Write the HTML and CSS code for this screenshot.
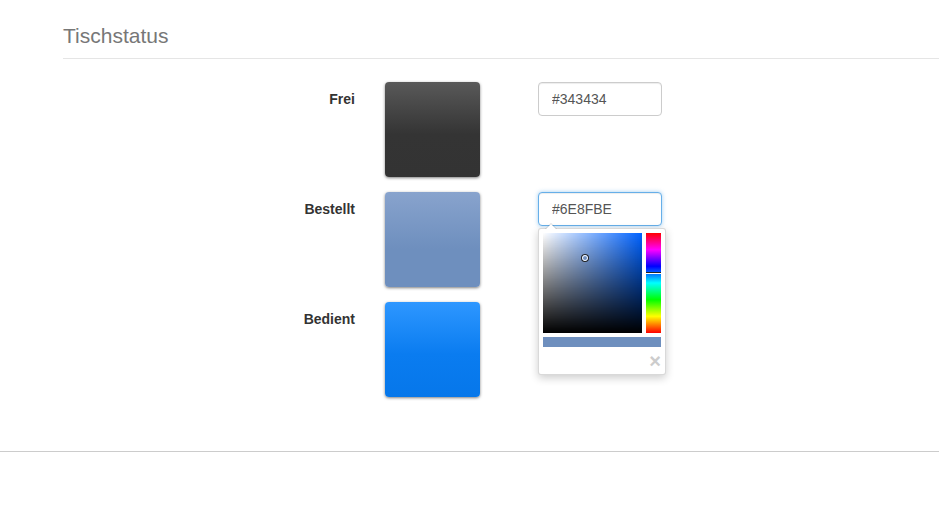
FILE: index.html
```html
<!DOCTYPE html>
<html>
<head>
    <title>Tischstatus</title>
    <link rel="stylesheet" href="styles.css">
</head>
<body>
    <div class="panel">
        <h2 class="panel-title">Tischstatus</h2>

        <div class="status-form">
            <div class="status-row">
                <label class="status-label" for="colFrei">Frei</label>
                <div class="swatch swatch-frei"></div>
                <div class="color-field">
                    <input type="text" id="colFrei" class="color-input" value="#343434">
                </div>
            </div>

            <div class="status-row">
                <label class="status-label" for="colBestellt">Bestellt</label>
                <div class="swatch swatch-bestellt"></div>
                <div class="color-field">
                    <input type="text" id="colBestellt" class="color-input focused" value="#6E8FBE">

                    <div class="picker">
                        <div class="picker-main">
                            <div class="sat-box">
                                <span class="sat-cursor"></span>
                            </div>
                            <div class="hue-bar">
                                <span class="hue-marker"></span>
                            </div>
                        </div>
                        <div class="picker-preview"></div>
                        <div class="picker-foot">
                            <span class="picker-close">&times;</span>
                        </div>
                    </div>
                </div>
            </div>

            <div class="status-row">
                <label class="status-label" for="colBedient">Bedient</label>
                <div class="swatch swatch-bedient"></div>
                <div class="color-field"></div>
            </div>
        </div>
    </div>
</body>
</html>
```

FILE: styles.css
```css
body {
    margin: 0;
    font-family: "Liberation Sans", Arial, sans-serif;
    font-size: 14px;
    color: #333;
    background: #fff;
}

.panel {
    border-bottom: 1px solid #cccccc;
    padding-bottom: 54px;
}

.panel-title {
    margin: 0 0 0 63px;
    padding: 24px 0 10px 0;
    font-size: 21px;
    font-weight: normal;
    line-height: 24px;
    color: #777;
    border-bottom: 1px solid #e5e5e5;
}

.status-form {
    padding-top: 23px;
    display: flex;
    flex-direction: column;
    gap: 15px;
}

.status-row {
    display: flex;
    align-items: flex-start;
}

.status-label {
    width: 355px;
    padding-top: 7px;
    line-height: 20px;
    text-align: right;
    font-weight: bold;
    color: #333;
}

.swatch {
    width: 95px;
    height: 95px;
    margin-left: 30px;
    border-radius: 4px;
    box-shadow: 0 1px 3px rgba(0, 0, 0, 0.5);
}

.swatch-frei {
    background: linear-gradient(#595959, #343434 55%, #333);
}

.swatch-bestellt {
    background: linear-gradient(#88a3cd, #6e8fbe 60%);
}

.swatch-bedient {
    background: linear-gradient(#2e97ff, #0a7cf0 55%, #0677ea);
}

.color-field {
    position: relative;
    margin-left: 58px;
    width: 124px;
}

.color-input {
    box-sizing: border-box;
    width: 124px;
    height: 34px;
    padding: 6px 13px;
    font-family: "Liberation Sans", Arial, sans-serif;
    font-size: 14px;
    color: #555;
    border: 1px solid #ccc;
    border-radius: 4px;
    background: #fff;
    box-shadow: inset 0 1px 1px rgba(0, 0, 0, 0.075);
    outline: none;
}

.color-input.focused {
    border-color: #66afe9;
    box-shadow: inset 0 1px 1px rgba(0, 0, 0, 0.075), 0 0 4px rgba(102, 175, 233, 0.6);
}

.picker {
    position: absolute;
    top: 36px;
    left: 0;
    box-sizing: border-box;
    width: 128px;
    height: 147px;
    padding: 4px;
    background: #fff;
    border: 1px solid rgba(0, 0, 0, 0.15);
    border-radius: 3px;
    box-shadow: 0 3px 8px rgba(0, 0, 0, 0.2);
}

.picker::before {
    content: "";
    position: absolute;
    top: -6px;
    left: 6px;
    border-left: 6px solid transparent;
    border-right: 6px solid transparent;
    border-bottom: 6px solid rgba(0, 0, 0, 0.15);
}

.picker::after {
    content: "";
    position: absolute;
    top: -5px;
    left: 7px;
    border-left: 5px solid transparent;
    border-right: 5px solid transparent;
    border-bottom: 5px solid #fff;
}

.picker-main {
    display: flex;
    gap: 4px;
}

.sat-box {
    position: relative;
    width: 100px;
    height: 100px;
    background:
        linear-gradient(to bottom, rgba(0, 0, 0, 0), #000),
        linear-gradient(to right, #fff, rgba(255, 255, 255, 0)),
        #0062ff;
}

.sat-cursor {
    position: absolute;
    left: 39px;
    top: 22px;
    width: 4px;
    height: 4px;
    border: 1px solid #fff;
    border-radius: 50%;
    box-shadow: 0 0 0 1px #222;
}

.hue-bar {
    position: relative;
    width: 15px;
    height: 100px;
    background: linear-gradient(to bottom, #f00, #f0f 16.7%, #00f 33.3%, #0ff 50%, #0f0 66.7%, #ff0 83.3%, #f00);
}

.hue-marker {
    position: absolute;
    left: 0;
    right: 0;
    top: 39px;
    height: 1px;
    background: #222;
    border-bottom: 1px solid #fff;
}

.picker-preview {
    margin-top: 4px;
    height: 10px;
    background: #6e8fbe;
}

.picker-foot {
    text-align: right;
}

.picker-close {
    display: inline-block;
    margin-top: 4px;
    font-size: 20px;
    line-height: 20px;
    font-weight: bold;
    color: #ccc;
}
```
